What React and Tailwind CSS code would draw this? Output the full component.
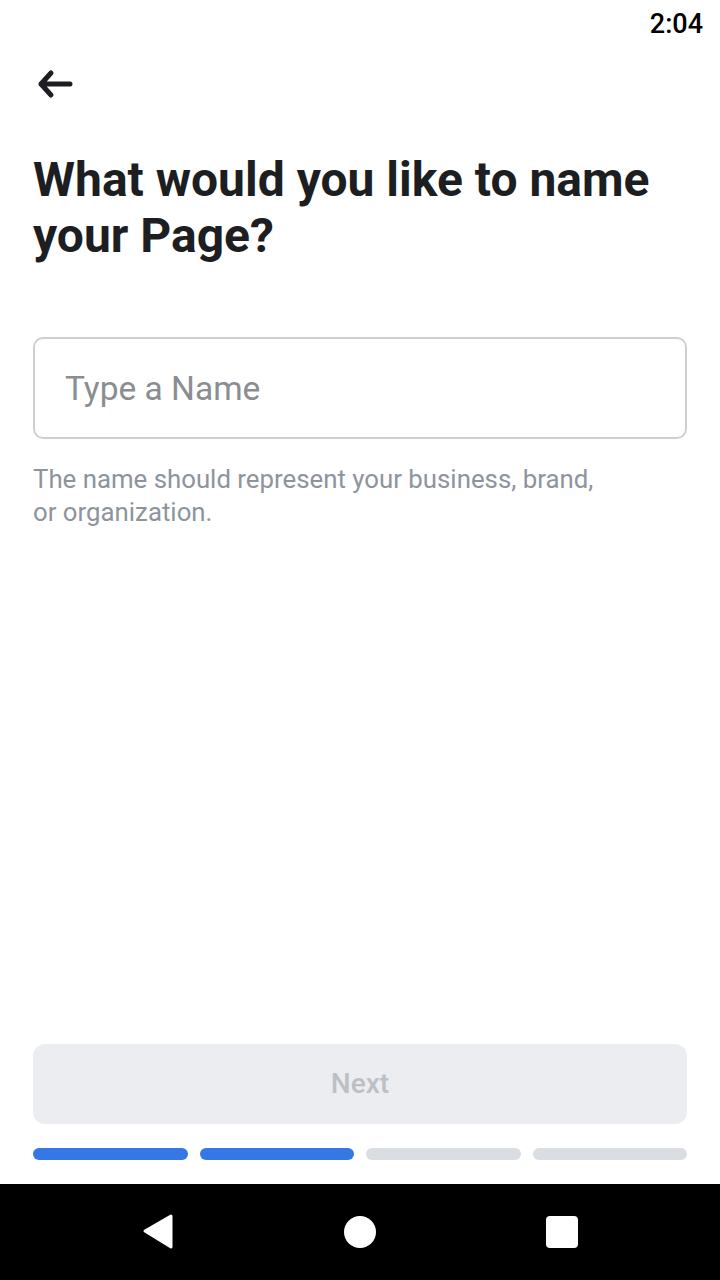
import { useState } from 'react';

const steps = [true, true, false, false];

const App = () => {
  const [name, setName] = useState('');

  return (
    <div className="w-[720px] h-[1280px] bg-white flex flex-col font-['Roboto',sans-serif]">
      {/* status bar */}
      <div className="h-[48px] flex items-center justify-end pr-[17px]">
        <span className="text-[27px] font-medium text-black leading-none">2:04</span>
      </div>

      <div className="flex-1 flex flex-col px-[33px]">
        <button className="w-[40px] h-[40px] ml-[3px] mt-[16px] flex items-center justify-center">
          <svg width="40" height="40" viewBox="0 0 40 40" fill="none">
            <path
              d="M15 9 L5 20 L15 31 M5 20 H34"
              stroke="#1c1e21"
              strokeWidth="5"
              strokeLinecap="round"
              strokeLinejoin="round"
            />
          </svg>
        </button>

        <h1 className="mt-[48px] text-[48px] leading-[56px] font-bold text-[#1c1e21]">
          What would you like to name your Page?
        </h1>

        {/* name input */}
        <input
          value={name}
          onChange={(e) => setName(e.target.value)}
          placeholder="Type a Name"
          className="mt-[73px] h-[102px] w-full rounded-[10px] border-2 border-[#ccd0d5] px-[30px] text-[33.5px] text-[#1c1e21] placeholder:text-[#8a8d91] outline-none"
        />
        <p className="mt-[24px] text-[25.8px] leading-[33px] text-[#8d949e]">
          The name should represent your business, brand,
          <br />
          or organization.
        </p>

        <div className="flex-1" />

        <button className="h-[80px] w-full rounded-[12px] bg-[#ebedf0] text-[28px] font-medium text-[#bcc0c4]">
          Next
        </button>

        <div className="mt-[24px] mb-[24px] flex gap-[12px]">
          {steps.map((done, i) => (
            <div
              key={i}
              className={`flex-1 h-[12px] rounded-full ${done ? 'bg-[#3578e5]' : 'bg-[#dadde1]'}`}
            />
          ))}
        </div>
      </div>

      {/* android nav bar */}
      <div className="h-[96px] bg-black flex items-center justify-center gap-[170px]">
        <svg width="32" height="36" viewBox="0 0 32 36">
          <path d="M29 2 L3 17 L29 33 Z" fill="white" stroke="white" strokeWidth="3" strokeLinejoin="round" />
        </svg>
        <div className="w-[32px] h-[32px] rounded-full bg-white" />
        <div className="w-[32px] h-[32px] rounded-[4px] bg-white" />
      </div>
    </div>
  );
};

export default App;
